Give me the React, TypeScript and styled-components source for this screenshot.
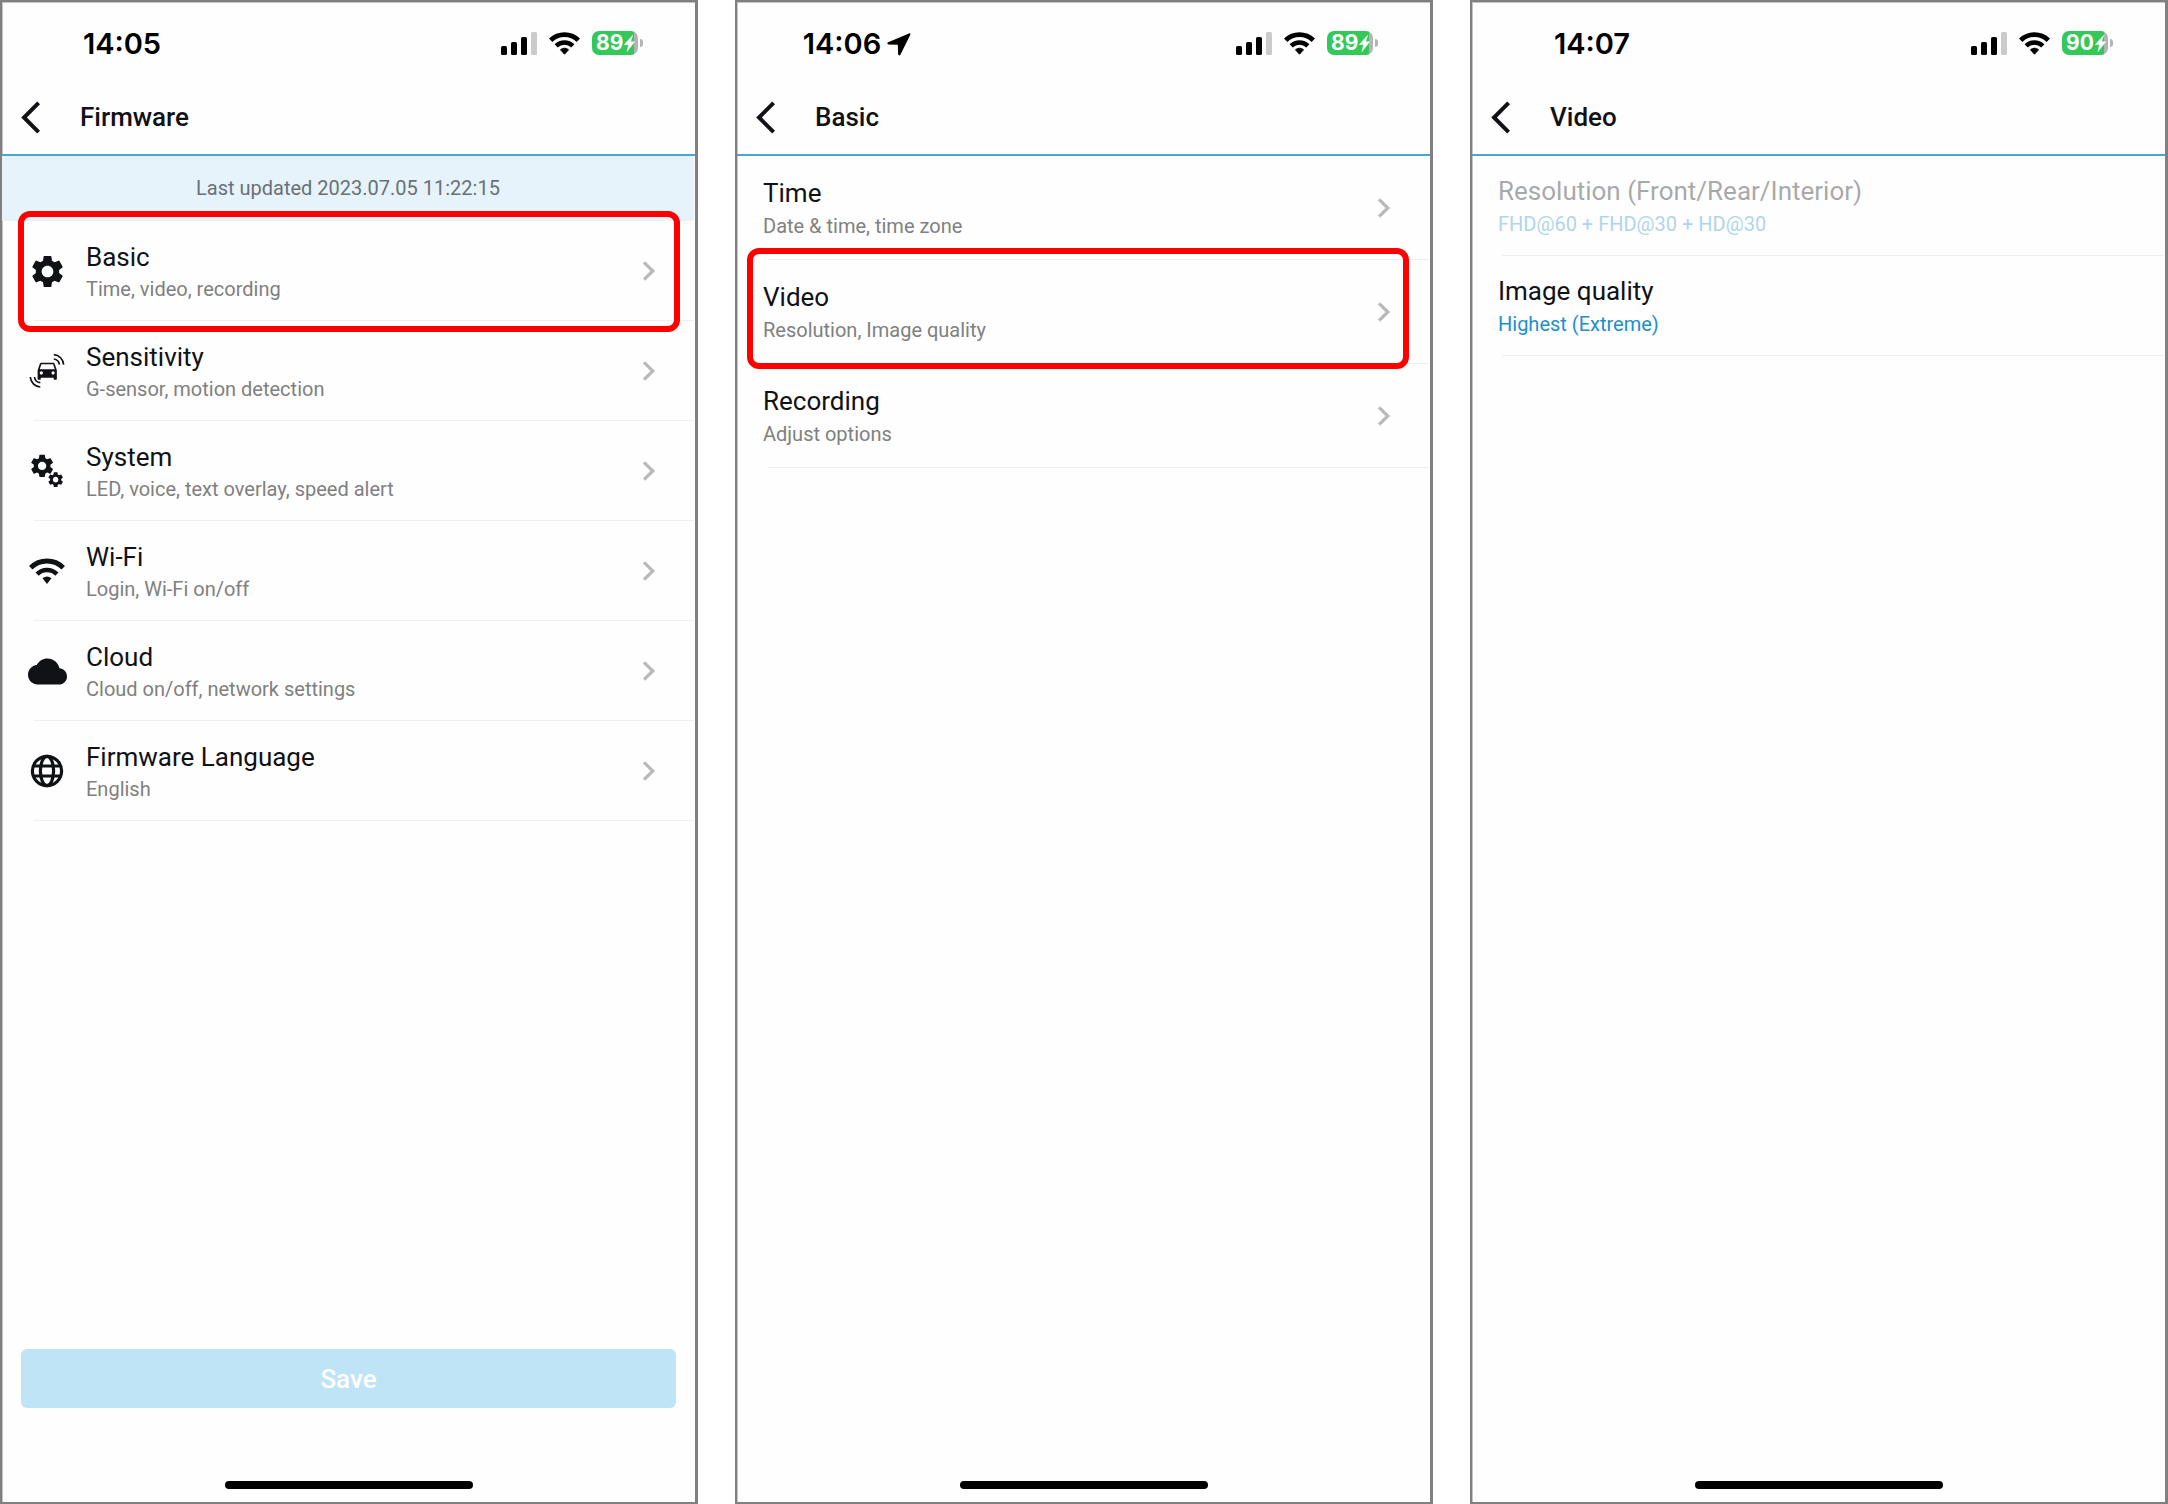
import React from 'react';
import styled, { createGlobalStyle } from 'styled-components';

const GlobalStyle = createGlobalStyle`
  *, *::before, *::after { box-sizing: border-box; }
  body { margin: 0; background: #fff; font-family: Roboto, "Liberation Sans", sans-serif; color: #111216; }
  button { font: inherit; color: inherit; border: 0; background: none; padding: 0; text-align: left; cursor: pointer; }
  h1, p, ul { margin: 0; padding: 0; }
  ul { list-style: none; }
  svg { display: block; flex: none; }
`;

const Board = styled.main`
  display: grid;
  grid-template-columns: repeat(3, minmax(0, 1fr));
  gap: 37px;
  min-height: 100vh;
`;

const Phone = styled.section`
  display: flex;
  flex-direction: column;
  border: 2px solid #808080;
  border-right-width: 3px;
  box-shadow: inset 1px 1px 0 #c4c4c4;
  background: #fefefe;
`;

const StatusBar = styled.div`
  display: flex;
  justify-content: space-between;
  align-items: center;
  height: 82px;
  padding-right: 52px;
`;

const Clock = styled.div`
  display: flex;
  justify-content: center;
  align-items: center;
  gap: 6px;
  width: 240px;
  padding-top: 2px;
  font: 600 29px/36px Inter, Roboto, sans-serif;
  color: #000;
`;

const Indicators = styled.div`
  display: flex;
  align-items: center;
  gap: 12px;
`;

const Battery = styled.div`
  display: flex;
  align-items: center;
  gap: 2px;
`;

const BatteryBody = styled.div`
  display: flex;
  align-items: center;
  gap: 1px;
  width: 46px;
  height: 24px;
  padding-left: 4px;
  border-radius: 7px;
  background: linear-gradient(to right, #34c759 42px, #b4b4b4 42px);
  color: #fff;
  font: 700 21px/24px Inter, Roboto, sans-serif;
`;

const BatteryNub = styled.div`
  width: 3px;
  height: 8px;
  border-radius: 0 3px 3px 0;
  background: #b4b4b4;
`;

const TitleBar = styled.header`
  display: flex;
  align-items: center;
  height: 72px;
  padding: 0 20px 4px 19px;
  border-bottom: 2px solid #4aa5d0;
`;

const BackButton = styled.button`
  width: 59px;
  height: 40px;
  display: flex;
  align-items: center;
`;

const ScreenTitle = styled.h1`
  font-size: 26px;
  line-height: 32px;
  font-weight: 500;
`;

const Banner = styled.p`
  height: 65px;
  margin-right: 1px;
  padding: 19px 0;
  background: #e6f3fb;
  color: #6a7076;
  font-size: 20px;
  line-height: 26px;
  text-align: center;
`;

const Item = styled.li<{ $height: number; $inset: number }>`
  position: relative;
  height: ${(p) => p.$height}px;
  &::after {
    content: '';
    position: absolute;
    left: ${(p) => p.$inset}px;
    right: 1px;
    bottom: 0;
    height: 1px;
    background: #efefef;
  }
`;

const RowButton = styled.button`
  display: flex;
  align-items: center;
  width: 100%;
  height: 100%;
  padding: 0 39px 0 26px;

  &:disabled { opacity: 0.36; cursor: default; }
`;

const IconSlot = styled.span`
  flex: none;
  width: 39px;
  margin-right: 19px;
  display: flex;
  justify-content: center;
`;

const Labels = styled.span<{ $roomy?: boolean }>`
  display: grid;
  flex: 1;
  row-gap: ${(p) => (p.$roomy ? 5 : 4)}px;
  padding-bottom: ${(p) => (p.$roomy ? 2 : 0)}px;
`;

const Label = styled.span`
  font-size: 26px;
  line-height: 32px;
`;

const Detail = styled.span<{ $accent?: boolean }>`
  font-size: 20px;
  line-height: 24px;
  color: ${(p) => (p.$accent ? '#1d8fcb' : '#808080')};
`;

const Highlight = styled.span<{ $edges: string }>`
  position: absolute;
  inset: ${(p) => p.$edges};
  z-index: 1;
  border: 6px solid #f00;
  border-radius: 12px;
  pointer-events: none;
`;

const Footer = styled.footer`
  display: flex;
  flex-direction: column;
  align-items: center;
  margin-top: auto;
  padding: 0 19px 13px;
`;

const SaveButton = styled.button`
  width: 100%;
  height: 59px;
  margin-bottom: 73px;
  border-radius: 6px;
  background: #bfe4f5;
  color: #fff;
  font-size: 26px;
  font-weight: 500;
  text-align: center;
`;

const HomeIndicator = styled.div`
  width: 248px;
  height: 8px;
  border-radius: 4px;
  background: #000;
`;

const polar = (cx: number, cy: number, r: number, deg: number) => {
  const a = (deg * Math.PI) / 180;
  return [cx + r * Math.sin(a), cy - r * Math.cos(a)];
};

const arc = (cx: number, cy: number, r: number, deg: number) => {
  const [x1, y1] = polar(cx, cy, r, -deg);
  const [x2, y2] = polar(cx, cy, r, deg);
  return `M${x1} ${y1}A${r} ${r} 0 0 1 ${x2} ${y2}`;
};

const ListWifi = () => (
  <svg width="37" height="26" viewBox="0 0 37 26" fill="none" stroke="#111216">
    <path d={arc(18, 26, 23, 45)} strokeWidth="4.8" />
    <path d={arc(18, 26, 14, 45)} strokeWidth="4.4" />
    <path d={arc(18, 26, 7.3, 38) + 'L18 26Z'} fill="#111216" stroke="none" />
  </svg>
);

const StatusWifi = () => (
  <svg width="31" height="23" viewBox="0 0 31 23" fill="none" stroke="#000">
    <path d={arc(15.5, 22.6, 19.9, 44)} strokeWidth="4.8" />
    <path d={arc(15.5, 22.6, 12, 44)} strokeWidth="4.5" />
    <path d={arc(15.5, 22.2, 6, 42) + 'L15.5 22.2Z'} fill="#000" strokeWidth="1" strokeLinejoin="round" />
  </svg>
);

const Signal = () => (
  <svg width="36" height="23" viewBox="0 0 36 23">
    <rect x="0" y="14" width="6" height="9" rx="1.5" />
    <rect x="10" y="10" width="6" height="13" rx="1.5" />
    <rect x="20" y="5" width="6" height="18" rx="1.5" />
    <rect x="30" y="0" width="6" height="23" rx="1.5" fill="#cbcbcb" />
  </svg>
);

const Bolt = () => (
  <svg width="11" height="17" viewBox="0 0 11 17" fill="#fff" stroke="#fff" strokeWidth=".6" strokeLinejoin="round">
    <path d="M8.6.5.4 9.600h4.300L3 16.500 10.600 6.800H6.500z" />
  </svg>
);

const LocationArrow = () => (
  <svg width="24" height="23" viewBox="0 0 24 23">
    <path d="M22 .4 1.2 9.2c-1.4.6-1 2.2.4 2.3l9.2.3.3 9.2c.1 1.6 1.8 1.9 2.4.5L23.3 1.7C23.7.7 23 0 22 .4z" />
  </svg>
);

const BackChevron = () => (
  <svg width="20" height="33" viewBox="0 0 20 33" fill="none" stroke="#111216" strokeWidth="4">
    <path d="M17.6 1.8 3 16.5 17.6 31.2" />
  </svg>
);

const RowChevron = () => (
  <svg width="14" height="20" viewBox="0 0 14 20" fill="none" stroke="#b9b9b9" strokeWidth="3.2">
    <path d="M2 1.4 10.8 10 2 18.6" />
  </svg>
);

const GEAR =
  'M19.14 12.94c.04-.3.06-.61.06-.94 0-.32-.02-.64-.07-.94l2.03-1.58c.18-.14.23-.41.12-.61l-1.92-3.32c-.12-.22-.37-.29-.59-.22l-2.39.96c-.5-.38-1.03-.7-1.62-.94L14.4 2.81c-.04-.24-.24-.41-.48-.41h-3.84c-.24 0-.43.17-.47.41L9.25 5.35c-.59.24-1.13.57-1.62.94l-2.39-.96c-.22-.08-.47 0-.59.22L2.74 8.87c-.12.21-.08.47.12.61l2.03 1.58c-.05.3-.09.63-.09.94s.02.64.07.94l-2.03 1.58c-.18.14-.23.41-.12.61l1.92 3.32c.12.22.37.29.59.22l2.39-.96c.5.38 1.03.7 1.62.94l.36 2.54c.05.24.24.41.48.41h3.84c.24 0 .44-.17.47-.41l.36-2.54c.59-.24 1.13-.56 1.62-.94l2.39.96c.22.08.47 0 .59-.22l1.92-3.32c.12-.22.07-.47-.12-.61l-2.01-1.58zM12 15.6c-1.98 0-3.6-1.62-3.6-3.6s1.62-3.6 3.6-3.6 3.6 1.62 3.6 3.6-1.62 3.6-3.6 3.6z';

const Gear = () => (
  <svg width="39" height="39" viewBox="0 0 24 24" fill="#111216"><path d={GEAR} /></svg>
);

const Gears = () => (
  <svg width="35" height="34" viewBox="0 0 35 34" fill="#111216">
    <path transform="translate(-1.8 -2) scale(1.16)" d={GEAR} />
    <path transform="translate(16.4 16.4) scale(.77)" d={GEAR} />
  </svg>
);

const Car = () => (
  <svg width="37" height="36" viewBox="0 0 37 36" fill="#111216">
    <path
      transform="translate(5.4 4.4) scale(1.07)"
      d="M18.92 6.01C18.72 5.42 18.16 5 17.5 5h-11c-.66 0-1.21.42-1.42 1.01L3 12v8c0 .55.45 1 1 1h1c.55 0 1-.45 1-1v-1h12v1c0 .55.45 1 1 1h1c.55 0 1-.45 1-1v-8l-2.08-5.99zM6.5 16c-.83 0-1.5-.67-1.5-1.5S5.67 13 6.5 13s1.5.67 1.5 1.5S7.33 16 6.5 16zm11 0c-.83 0-1.5-.67-1.5-1.5s.67-1.5 1.5-1.5 1.5.67 1.5 1.5-.67 1.5-1.5 1.5zM5 11l1.5-4.5h11L19 11H5z"
    />
    <g fill="none" stroke="#111216" strokeWidth="1.7">
      <path d="M24.8 1.6c5.4.4 9.4 4.6 9.8 10M24.8 6c3 .4 5.2 2.6 5.6 5.6M1.3 24c.4 5.4 4.5 9.6 10 10M5.5 24c.4 3 2.7 5.3 5.8 5.7" />
    </g>
  </svg>
);

const Cloud = () => (
  <svg width="39" height="39" viewBox="0 0 24 24" fill="#111216">
    <path d="M19.35 10.04C18.67 6.59 15.64 4 12 4 9.11 4 6.6 5.64 5.35 8.04 2.34 8.36 0 10.91 0 14c0 3.31 2.69 6 6 6h13c2.76 0 5-2.24 5-5 0-2.64-2.05-4.78-4.65-4.96z" />
  </svg>
);

const Globe = () => (
  <svg width="35" height="34" viewBox="0 0 35 34" fill="none" stroke="#111216" strokeWidth="3.2">
    <circle cx="17" cy="17" r="14.6" />
    <ellipse cx="17" cy="17" rx="6.6" ry="14.6" />
    <path d="M3.5 12h27M3.5 22h27" />
  </svg>
);

type Row = {
  label: string;
  detail: string;
  icon?: React.ReactNode;
  highlight?: string;
  disabled?: boolean;
};

type ScreenProps = {
  time: string;
  located?: boolean;
  battery: number;
  title: string;
  banner?: string;
  rows: Row[];
  rowHeight: number;
  plain?: boolean;
  save?: boolean;
};

function Screen({ time, located, battery, title, banner, rows, rowHeight, plain, save }: ScreenProps) {
  const hasIcons = Boolean(rows[0].icon);
  return (
    <Phone aria-label={title}>
      <StatusBar>
        <Clock>
          {time}
          {located && <LocationArrow />}
        </Clock>
        <Indicators>
          <Signal />
          <StatusWifi />
          <Battery>
            <BatteryBody>{battery}<Bolt /></BatteryBody>
            <BatteryNub />
          </Battery>
        </Indicators>
      </StatusBar>
      <TitleBar>
        <BackButton type="button" aria-label="Back"><BackChevron /></BackButton>
        <ScreenTitle>{title}</ScreenTitle>
      </TitleBar>
      {banner && <Banner>{banner}</Banner>}
      <ul>
        {rows.map((row) => (
          <Item key={row.label} $height={rowHeight} $inset={hasIcons ? 32 : 30}>
            <RowButton type="button" disabled={row.disabled}>
              {row.icon && <IconSlot>{row.icon}</IconSlot>}
              <Labels $roomy={!hasIcons}>
                <Label>{row.label}</Label>
                <Detail $accent={plain}>{row.detail}</Detail>
              </Labels>
              {!plain && <RowChevron />}
            </RowButton>
            {row.highlight && <Highlight $edges={row.highlight} />}
          </Item>
        ))}
      </ul>
      <Footer>
        {save && <SaveButton type="button">Save</SaveButton>}
        <HomeIndicator />
      </Footer>
    </Phone>
  );
}

export default function App() {
  return (
    <>
      <GlobalStyle />
      <Board>
        <Screen
          time="14:05"
          battery={89}
          title="Firmware"
          banner="Last updated 2023.07.05 11:22:15"
          rowHeight={100}
          save
          rows={[
            { label: 'Basic', detail: 'Time, video, recording', icon: <Gear />, highlight: '-10px 15px -11px 16px' },
            { label: 'Sensitivity', detail: 'G-sensor, motion detection', icon: <Car /> },
            { label: 'System', detail: 'LED, voice, text overlay, speed alert', icon: <Gears /> },
            { label: 'Wi-Fi', detail: 'Login, Wi-Fi on/off', icon: <ListWifi /> },
            { label: 'Cloud', detail: 'Cloud on/off, network settings', icon: <Cloud /> },
            { label: 'Firmware Language', detail: 'English', icon: <Globe /> },
          ]}
        />
        <Screen
          time="14:06"
          located
          battery={89}
          title="Basic"
          rowHeight={104}
          rows={[
            { label: 'Time', detail: 'Date & time, time zone' },
            { label: 'Video', detail: 'Resolution, Image quality', highlight: '-12px 21px -5px 10px' },
            { label: 'Recording', detail: 'Adjust options' },
          ]}
        />
        <Screen
          time="14:07"
          battery={90}
          title="Video"
          rowHeight={100}
          plain
          rows={[
            { label: 'Resolution (Front/Rear/Interior)', detail: 'FHD@60 + FHD@30 + HD@30', disabled: true },
            { label: 'Image quality', detail: 'Highest (Extreme)' },
          ]}
        />
      </Board>
    </>
  );
}
